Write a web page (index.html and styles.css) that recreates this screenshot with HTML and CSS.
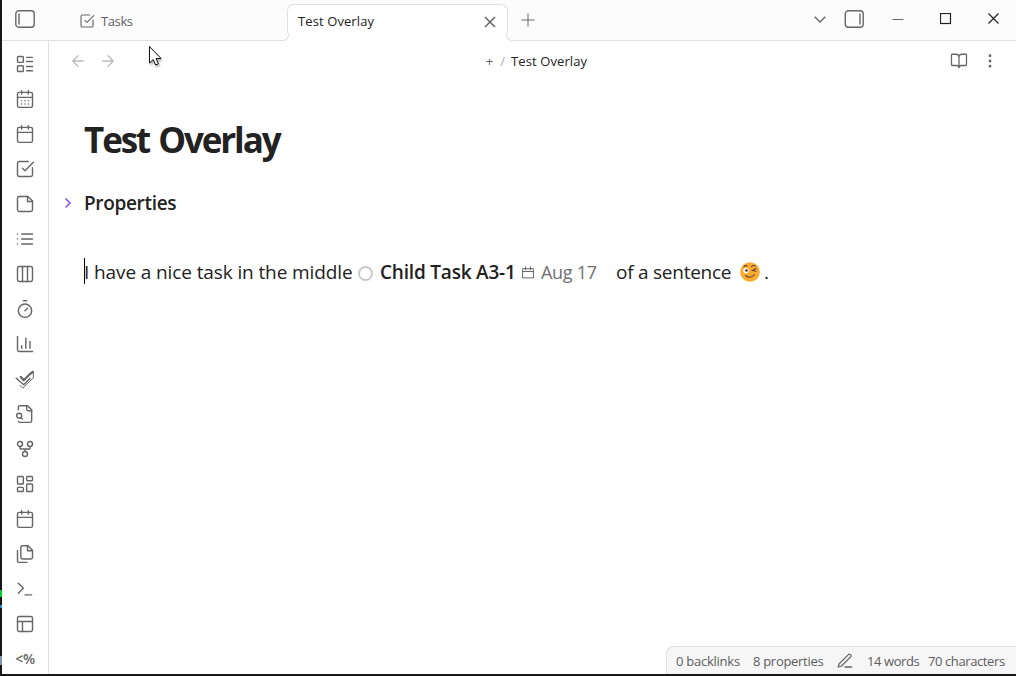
FILE: index.html
```html
<!DOCTYPE html>
<html lang="en"><head><meta charset="utf-8"><title>Test Overlay</title><link rel="stylesheet" href="styles.css"></head>
<body>
<div class="app">
<header class="titlebar">
  <svg class="panel-left" width="20" height="18" viewBox="0 0 20 18"><rect x=".8" y=".8" width="18.4" height="16.4" rx="3"/><path d="M4 4v10"/></svg>
  <div class="tab"><svg class="icon s16" viewBox="0 0 24 24"><path d="M21 10.5V19a2 2 0 0 1-2 2H5a2 2 0 0 1-2-2V5a2 2 0 0 1 2-2h11"/><path d="m9 11 3 3L22 4"/></svg><span class="t-tasks">Tasks</span></div>
  <div class="tab active"><span class="t-tab">Test Overlay</span><svg class="tab-close" width="12" height="12" viewBox="0 0 12 12"><path d="M1 1l10 10M11 1L1 11"/></svg></div>
  <svg class="plus" width="14" height="14" viewBox="0 0 14 14"><path d="M7 .5v13M.5 7h13"/></svg>
  <div class="window-controls">
    <svg class="chev" width="12" height="7" viewBox="0 0 12 7"><path d="M.7.7 6 6 11.300.7"/></svg>
    <svg class="panel-right" width="20" height="18" viewBox="0 0 20 18"><rect x="1.300" y=".8" width="17.900" height="16.4" rx="3"/><path d="M16 4v10"/></svg>
    <svg class="min" width="12" height="12" viewBox="0 0 12 12"><path d="M.5 6.500h11"/></svg>
    <svg class="max" width="12" height="12" viewBox="0 0 12 12"><rect x=".5" y=".5" width="10" height="10"/></svg>
    <svg class="close" width="12" height="12" viewBox="0 0 12 12"><path d="M.5 .5l10 10M10.500 .5l-10 10"/></svg>
  </div>
</header>
<div class="body">
<nav class="ribbon">
  <svg class="icon" viewBox="0 0 24 24"><rect x="3" y="3" width="7" height="7" rx="1"/><rect x="3" y="14" width="7" height="7" rx="1"/><path d="M14 4h7M14 9h7M14 15h7M14 20h7"/></svg>
  <svg class="icon" viewBox="0 0 24 24"><rect x="3" y="4" width="18" height="18" rx="2"/><path d="M8 2v4M16 2v4M3 10h18M8 14h.01M12 14h.01M16 14h.01M8 18h.01M12 18h.01M16 18h.01"/></svg>
  <svg class="icon" viewBox="0 0 24 24"><rect x="3" y="4" width="18" height="18" rx="2"/><path d="M8 2v4M16 2v4M3 10h18"/></svg>
  <svg class="icon" viewBox="0 0 24 24"><path d="M21 10.500V19a2 2 0 0 1-2 2H5a2 2 0 0 1-2-2V5a2 2 0 0 1 2-2h11"/><path d="m9 11 3 3L22 4"/></svg>
  <svg class="icon" viewBox="0 0 24 24"><path d="M15.500 3H5a2 2 0 0 0-2 2v14a2 2 0 0 0 2 2h14a2 2 0 0 0 2-2V8.500L15.500 3z"/><path d="M15 3v6h6"/></svg>
  <svg class="icon" viewBox="0 0 24 24"><path d="M8 6h13M8 12h13M8 18h13M3 6h.01M3 12h.01M3 18h.01"/></svg>
  <svg class="icon" viewBox="0 0 24 24"><rect x="3" y="3" width="18" height="18" rx="2"/><path d="M9 3v18M15 3v18"/></svg>
  <svg class="icon" viewBox="0 0 24 24"><path d="M10 2h4M12 14l3-3"/><circle cx="12" cy="14" r="8"/></svg>
  <svg class="icon" viewBox="0 0 24 24"><path d="M3 3v16a2 2 0 0 0 2 2h16M8 17v-3M13 17V5M18 17V9"/></svg>
  <svg class="icon checks" viewBox="0 0 24 24"><path class="thick" d="M7 9.500l3.500 4L18 6l3.500-2.500"/><path class="mid" d="M1.500 11l9 8L18 11.500"/><path d="M6 19.500l3.500 3.500L22 10.500V3"/></svg>
  <svg class="icon" viewBox="0 0 24 24"><path d="M14 2v4a2 2 0 0 0 2 2h4"/><path d="M4.268 21a2 2 0 0 0 1.727 1H18a2 2 0 0 0 2-2V7l-5-5H6a2 2 0 0 0-2 2v3"/><path d="m9 18-1.500-1.500"/><circle cx="5" cy="14" r="3"/></svg>
  <svg class="icon" viewBox="0 0 24 24"><circle cx="12" cy="18" r="3"/><circle cx="6" cy="6" r="3"/><circle cx="18" cy="6" r="3"/><path d="M18 9v2c0 .6-.4 1-1 1H7c-.6 0-1-.4-1-1V9M12 12v3"/></svg>
  <svg class="icon" viewBox="0 0 24 24"><rect x="3" y="3" width="7" height="9" rx="1"/><rect x="14" y="3" width="7" height="5" rx="1"/><rect x="14" y="12" width="7" height="9" rx="1"/><rect x="3" y="16" width="7" height="5" rx="1"/></svg>
  <svg class="icon" viewBox="0 0 24 24"><rect x="3" y="4" width="18" height="18" rx="2"/><path d="M8 2v4M16 2v4M3 10h18"/></svg>
  <svg class="icon" viewBox="0 0 24 24"><path d="M15 2H9a2 2 0 0 0-2 2v12a2 2 0 0 0 2 2h10a2 2 0 0 0 2-2V7.500L15.500 2z"/><path d="M15 2v6h6M3 7.600v12.800A1.600 1.600 0 0 0 4.600 22h9.800"/></svg>
  <svg class="icon" viewBox="0 0 24 24"><path d="m4 17 6-6-6-6M12 19h8"/></svg>
  <svg class="icon" viewBox="0 0 24 24"><rect x="3" y="3" width="18" height="18" rx="2"/><path d="M3 9h18M9 21V9"/></svg>
  <span class="tpl">&lt;%</span>
</nav>
<main class="pane">
  <div class="view-header">
    <div class="nav"><svg class="icon" viewBox="0 0 24 24"><path d="m12 19-7-7 7-7M19 12H5"/></svg><svg class="icon" viewBox="0 0 24 24"><path d="M5 12h14M12 5l7 7-7 7"/></svg></div>
    <div class="crumbs"><span class="c-plus">+</span><span class="c-sep">/</span><span class="t-crumb">Test Overlay</span></div>
    <div class="actions"><svg class="icon" viewBox="0 0 24 24"><path d="M12 7v14M3 18a1 1 0 0 1-1-1V4a1 1 0 0 1 1-1h5a4 4 0 0 1 4 4 4 4 0 0 1 4-4h5a1 1 0 0 1 1 1v13a1 1 0 0 1-1 1h-6a3 3 0 0 0-3 3 3 3 0 0 0-3-3z"/></svg><svg class="icon" viewBox="0 0 24 24"><circle cx="12" cy="12" r="1"/><circle cx="12" cy="5" r="1"/><circle cx="12" cy="19" r="1"/></svg></div>
  </div>
  <article class="note">
    <h1>Test Overlay</h1>
    <div class="props"><svg width="8" height="12" viewBox="0 0 8 12"><path d="M1.500 1.500 6 6l-4.500 4.500"/></svg><span class="t-props">Properties</span></div>
    <p class="line"><i class="caret"></i><span class="w1">I have a nice task in the middle</span><i class="ring"></i><span class="w2">Child Task A3-1</span><svg class="cal" width="12" height="13" viewBox="0 0 12 13"><path d="M.6 2.700h10.800v9.200H.6zM.6 5.500h10.800M3.500.5v3.500M8.500.5v3.500"/></svg><span class="w3">Aug 17</span><span class="w4">of a sentence</span><svg class="emoji" width="20" height="20" viewBox="0 0 20 20"><circle class="face" cx="10" cy="10" r="9.800"/><circle class="white" cx="6" cy="8.500" r="2.700"/><circle class="dark" cx="6.500" cy="8.500" r="1.300"/><path d="M4 4.500Q5.500 3 7 4M11.500 4.500Q13 2.800 15.500 4M16 6.500 12.500 8.500l3.500.8M5.500 13.500Q10.500 17.500 14.500 12.500"/></svg><span>.</span></p>
  </article>
</main>
</div>
<footer class="status"><span class="s1">0 backlinks</span><span class="s2">8 properties</span><svg class="icon" viewBox="0 0 24 24"><path d="M12 20h9M16.500 3.500a2.120 2.120 0 0 1 3 3L7 19l-4 1 1-4z"/></svg><span class="s3">14 words</span><span class="s4">70 characters</span></footer>
<svg class="cursor" width="16" height="24" viewBox="0 0 16 24"><path d="M1.500 1.500v16.500l3.700-3.500 2.500 5.500 2.700-1.200-2.400-5.300h5z"/></svg>
</div>
</body></html>
```
FILE: styles.css
```css
*{box-sizing:border-box}
body{margin:0;background:linear-gradient(#0c3,#0c3) 0 590px/2px 7px no-repeat,linear-gradient(#38c,#38c) 0 605px/2px 3px no-repeat,linear-gradient(#7896b0,#7896b0) 0 656px/2px 9px no-repeat,#18181b;font:13px/18px "Open Sans","Noto Sans",sans-serif;color:#222;overflow:hidden}
svg{fill:none;stroke:#666;flex:none;display:block}
.icon{width:20px;height:20px;stroke-width:1.7;stroke-linecap:round;stroke-linejoin:round}
.s16{width:16px;height:16px}
.app{position:relative;width:1014px;height:674px;margin-left:2px;background:#fff;display:flex;flex-direction:column}
.titlebar{height:41px;background:#fcfcfc;border-bottom:1px solid #e0e0e0;display:flex;flex:none}
.panel-left,.panel-right{stroke-width:1.4;stroke-linecap:round}
.panel-left{margin:10px 0 0 13px}
.tab{width:208px;margin:4px 0 0 44px;height:37px;padding-top:8px;display:flex;color:#5c5c5c}
.tab .icon{margin-top:1px}
.t-tasks{margin-left:6px;letter-spacing:-.4px}
.active{position:relative;width:221px;margin-left:0;padding:7px 11px 0 10px;background:#fff;border:1px solid #e0e0e0;border-bottom:0;border-radius:7px 7px 0 0;justify-content:space-between;color:#222}
.active::before,.active::after{content:"";position:absolute;bottom:0;width:7px;height:7px;border:1px solid #e0e0e0;box-shadow:2px 2px 0 #fff}
.active::before{left:-7px;border-width:0 1px 1px 0;border-bottom-right-radius:6px;background:#fcfcfc}
.active::after{right:-7px;border-width:0 0 1px 1px;border-bottom-left-radius:6px;background:#fcfcfc;box-shadow:-2px 2px 0 #fff}
.t-tab,.t-crumb{letter-spacing:.1px}
.tab-close{stroke-width:1.5;margin-top:4px}
.plus{margin:13px 0 0 13px}
.window-controls{display:flex;margin-left:auto;padding-right:17px}
.chev{margin:16px 18px 0 0;stroke-width:1.3}
.panel-right{margin:10px 28px 0 0}
.min,.max,.close{margin-top:13px;margin-right:36px}
.max,.close{stroke:#222;stroke-width:1.2}
.close{margin-right:-1px}
.body{display:flex;flex:1;min-height:0}
.ribbon{width:47px;border-right:1px solid #e0e0e0;padding-top:13px;display:flex;flex-direction:column;align-items:center;gap:15px}
.checks{stroke-width:1.2}
.checks .thick{stroke-width:2.6}
.checks .mid{stroke-width:1.7}
.tpl{font-weight:600;font-size:14px;line-height:19px;color:#666;letter-spacing:-.3px}
.pane{flex:1}
.view-header{height:40px;display:flex;justify-content:space-between;padding:10px 17px 0 20px}
.nav{display:flex;gap:12px}
.nav .icon,.actions .icon{width:18px;height:18px;margin-top:1px}
.nav .icon{stroke:#bababa}
.crumbs{display:flex;margin:1px 0 0 6px}
.c-plus{margin-right:7px;color:#5c5c5c}
.c-sep{margin-right:6px;color:#ababab}
.actions{display:flex;gap:13px}
.note{padding:0 35px}
h1{margin:34px 0 0;font-size:35px;line-height:50px;font-weight:700;letter-spacing:-2.1px;word-spacing:2px}
.props{margin:25px 0 0 -20px;display:flex;align-items:center;font-size:19px;line-height:26px;font-weight:600}
.props svg{stroke:#8a5cf5;stroke-width:1.7;margin-right:12px}
.t-props{letter-spacing:-.33px}
.line{margin:43px 0 0;display:flex;align-items:flex-start;font-size:19px;line-height:26px;white-space:nowrap;position:relative}
.caret{position:absolute;left:0;top:-1px;width:1px;height:26px;background:#000}
.w1{width:274px;letter-spacing:-.11px}
.ring{width:15px;height:15px;border:2px solid #c8c8c8;border-radius:50%;margin:7px 7px 0 0}
.w2{width:142px;font-weight:600;letter-spacing:-.2px}
.cal{margin:7px 7px 0 0}
.w3{width:75px;color:#6f6f6f;font-size:18px;letter-spacing:-.3px}
.w4{width:124px;letter-spacing:-.25px}
.emoji{margin:3px 4px 0 0;stroke:#5d4037;stroke-width:1.1;stroke-linecap:round}
.face{fill:#fcab30;stroke:none}.white{fill:#fff;stroke:none}.dark{fill:#403030;stroke:none}
.status{position:absolute;right:0;bottom:0;width:350px;height:28px;background:#f6f6f6;border:1px solid #e0e0e0;border-width:1px 0 0 1px;border-radius:8px 0 0 0;display:flex;padding:5px 0 0 9px;color:#5c5c5c;white-space:nowrap}
.s1{width:77px;letter-spacing:-.25px}.s2{width:83px;letter-spacing:-.3px}.status .icon{width:18px;height:18px;margin-right:13px}.s3{width:61px;letter-spacing:-.42px}.s4{letter-spacing:-.4px}
.cursor{position:absolute;left:146px;top:45px;fill:#fff;stroke:#111;filter:drop-shadow(1px 2px 1px #0005)}
```
